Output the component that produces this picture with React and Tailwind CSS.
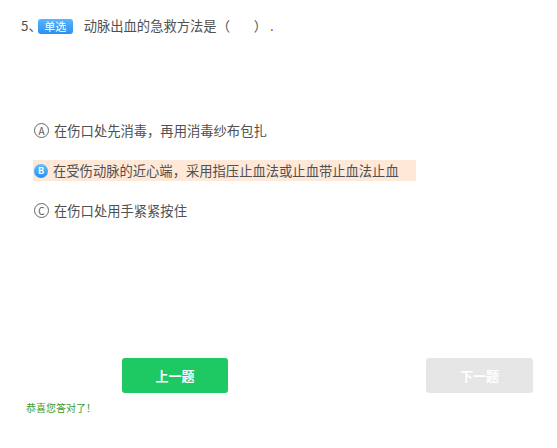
import React from "react";

const options = [
  { key: "A", text: "在伤口处先消毒，再用消毒纱布包扎" },
  { key: "B", text: "在受伤动脉的近心端，采用指压止血法或止血带止血法止血", picked: true },
  { key: "C", text: "在伤口处用手紧紧按住" },
];

const OptionMark = ({ letter, picked }) =>
  picked ? (
    <span className="mr-[5px] flex h-[14px] w-[14px] shrink-0 items-center justify-center rounded-full bg-gradient-to-b from-[#5cc0ff] to-[#2a8ef0] text-[9px] font-bold leading-none text-white">
      {letter}
    </span>
  ) : (
    <span className="mr-[5px] flex h-[15px] w-[15px] shrink-0 items-center justify-center rounded-full border border-[#666] text-[10px] leading-none text-[#555]">
      {letter}
    </span>
  );

const App = () => {
  return (
    <div
      className="flex h-[448px] w-[557px] flex-col bg-white text-[#505050]"
      style={{ fontFamily: '"Noto Sans CJK SC", "Noto Sans", sans-serif' }}
    >
      <div className="flex items-center pl-[21px] pt-[16px] text-[13.3px] leading-[20px]">
        <span>5、</span>
        <span className="-ml-[4px] flex h-[15px] w-[35px] items-center justify-center rounded-[3px] bg-gradient-to-b from-[#55b6ff] to-[#2c8ff0] text-[11px] leading-none text-white">
          单选
        </span>
        <span className="ml-[11px] whitespace-pre">动脉出血的急救方法是（        ） .</span>
      </div>

      <div className="ml-[33px] mt-[84px] flex flex-col gap-[19px]">
        {options.map((opt) => (
          <div
            key={opt.key}
            className={`flex h-[21px] items-center self-start pl-[1px] pr-[17px] text-[13.3px] leading-[21px] ${
              opt.picked ? "bg-[#fee8d8]" : ""
            }`}
          >
            <OptionMark letter={opt.key} picked={opt.picked} />
            <span>{opt.text}</span>
          </div>
        ))}
      </div>

      <div className="mt-[137px] flex justify-between pl-[122px] pr-[24px]">
        <button
          type="button"
          className="h-[35px] w-[106px] rounded-[3px] bg-[#1ec862] text-[13px] font-bold text-white"
        >
          上一题
        </button>
        <button
          type="button"
          className="h-[35px] w-[107px] rounded-[3px] bg-[#e6e6e6] text-[13px] font-bold text-white"
        >
          下一题
        </button>
      </div>

      <p className="ml-[26px] mt-[8px] text-[10px] leading-[14px] text-[#3d9a27]">恭喜您答对了！</p>
    </div>
  );
};

export default App;
